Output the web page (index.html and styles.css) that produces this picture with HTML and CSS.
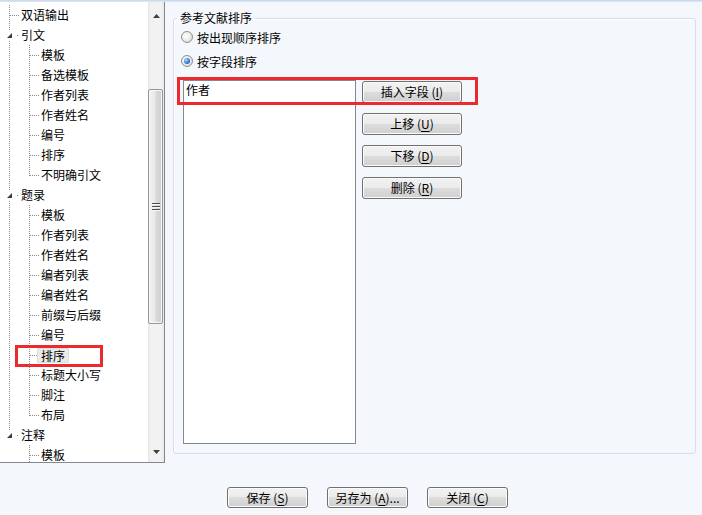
FILE: index.html
```html
<!DOCTYPE html>
<html lang="zh-CN">
<head>
<meta charset="utf-8">
<title>参考文献排序</title>
<link rel="stylesheet" href="styles.css">
</head>
<body>
<div class="topline"></div>
<div class="main">
  <div class="tree">
    <ul class="tree-list">
      <li class="row"><span class="c t"></span><span class="lbl">双语输出</span></li>
      <li class="row"><span class="c x"><svg width="9" height="9" viewBox="0 0 9 9"><rect width="9" height="9" fill="#fff"/><polygon points="7,2 7,7 2,7" fill="#3c3c3c"/></svg></span><span class="lbl">引文</span></li>
      <li class="row"><span class="c v"></span><span class="c t"></span><span class="lbl">模板</span></li>
      <li class="row"><span class="c v"></span><span class="c t"></span><span class="lbl">备选模板</span></li>
      <li class="row"><span class="c v"></span><span class="c t"></span><span class="lbl">作者列表</span></li>
      <li class="row"><span class="c v"></span><span class="c t"></span><span class="lbl">作者姓名</span></li>
      <li class="row"><span class="c v"></span><span class="c t"></span><span class="lbl">编号</span></li>
      <li class="row"><span class="c v"></span><span class="c t"></span><span class="lbl">排序</span></li>
      <li class="row"><span class="c v"></span><span class="c l"></span><span class="lbl">不明确引文</span></li>
      <li class="row"><span class="c x"><svg width="9" height="9" viewBox="0 0 9 9"><rect width="9" height="9" fill="#fff"/><polygon points="7,2 7,7 2,7" fill="#3c3c3c"/></svg></span><span class="lbl">题录</span></li>
      <li class="row"><span class="c v"></span><span class="c t"></span><span class="lbl">模板</span></li>
      <li class="row"><span class="c v"></span><span class="c t"></span><span class="lbl">作者列表</span></li>
      <li class="row"><span class="c v"></span><span class="c t"></span><span class="lbl">作者姓名</span></li>
      <li class="row"><span class="c v"></span><span class="c t"></span><span class="lbl">编者列表</span></li>
      <li class="row"><span class="c v"></span><span class="c t"></span><span class="lbl">编者姓名</span></li>
      <li class="row"><span class="c v"></span><span class="c t"></span><span class="lbl">前缀与后缀</span></li>
      <li class="row"><span class="c v"></span><span class="c t"></span><span class="lbl">编号</span></li>
      <li class="row marked"><span class="c v"></span><span class="c t"></span><span class="lbl sel">排序</span><span class="mark mark-tree"></span></li>
      <li class="row"><span class="c v"></span><span class="c t"></span><span class="lbl">标题大小写</span></li>
      <li class="row"><span class="c v"></span><span class="c t"></span><span class="lbl">脚注</span></li>
      <li class="row"><span class="c v"></span><span class="c l"></span><span class="lbl">布局</span></li>
      <li class="row"><span class="c xl"><svg width="9" height="9" viewBox="0 0 9 9"><rect width="9" height="9" fill="#fff"/><polygon points="7,2 7,7 2,7" fill="#3c3c3c"/></svg></span><span class="lbl">注释</span></li>
      <li class="row"><span class="c"></span><span class="c t"></span><span class="lbl">模板</span></li>
    </ul>
    <div class="scrollbar">
      <div class="sb-btn sb-up"><svg width="7" height="4" viewBox="0 0 7 4"><polygon points="0,4 7,4 3.5,0" fill="#404040"/></svg></div>
      <div class="sb-track">
        <div class="sb-thumb"><span class="grip"></span></div>
      </div>
      <div class="sb-btn sb-down"><svg width="7" height="4" viewBox="0 0 7 4"><polygon points="0,0 7,0 3.5,4" fill="#404040"/></svg></div>
    </div>
  </div>
  <div class="content">
    <fieldset class="group">
      <legend>参考文献排序</legend>
      <label class="radio"><span class="rb"></span>按出现顺序排序</label>
      <label class="radio on"><span class="rb"></span>按字段排序</label>
      <div class="fields">
        <div class="listbox"><div class="item">作者</div></div>
        <div class="btns">
          <button class="btn">插入字段 (<u>I</u>)</button>
          <button class="btn">上移 (<u>U</u>)</button>
          <button class="btn">下移 (<u>D</u>)</button>
          <button class="btn">删除 (<u>R</u>)</button>
        </div>
        <span class="mark mark-fields"></span>
      </div>
    </fieldset>
  </div>
</div>
<div class="footer">
  <button class="btn fbtn">保存 (<u>S</u>)</button>
  <button class="btn fbtn">另存为 (<u>A</u>)...</button>
  <button class="btn fbtn">关闭 (<u>C</u>)</button>
</div>
</body>
</html>
```
FILE: styles.css
```css
* { box-sizing: border-box; }
html, body { margin: 0; padding: 0; }
body {
  width: 702px;
  height: 515px;
  overflow: hidden;
  background: #f4f7fc;
  font-family: "Noto Sans CJK SC", "Noto Sans", sans-serif;
  font-size: 12px;
  color: #000;
}
.topline {
  height: 2px;
  background: linear-gradient(#c3d5ea, #e2ebf6);
}
.main {
  display: flex;
  height: 461px;
}
.tree {
  width: 165px;
  height: 461px;
  flex: none;
  display: flex;
  background: #fff;
  border-right: 1px solid #828790;
  border-bottom: 1px solid #828790;
}
.tree-list {
  list-style: none;
  margin: 0;
  padding: 3px 0 0 0;
  width: 148px;
  flex: none;
  overflow: hidden;
}
.row {
  display: flex;
  align-items: center;
  height: 20px;
  position: relative;
  white-space: nowrap;
}
.c {
  width: 20px;
  height: 20px;
  flex: none;
  background-repeat: no-repeat;
}
.c.v {
  background-image: repeating-linear-gradient(to bottom, #8a8a8a 0 1px, transparent 1px 2px);
  background-size: 1px 20px;
  background-position: 9px 0;
}
.c.t {
  background-image:
    repeating-linear-gradient(to bottom, #8a8a8a 0 1px, transparent 1px 2px),
    repeating-linear-gradient(to right, #8a8a8a 0 1px, transparent 1px 2px);
  background-size: 1px 20px, 9px 1px;
  background-position: 9px 0, 10px 10px;
}
.c.l {
  background-image:
    repeating-linear-gradient(to bottom, #8a8a8a 0 1px, transparent 1px 2px),
    repeating-linear-gradient(to right, #8a8a8a 0 1px, transparent 1px 2px);
  background-size: 1px 11px, 9px 1px;
  background-position: 9px 0, 10px 10px;
}
.c.x, .c.xl {
  display: flex;
  align-items: flex-start;
  background-image:
    repeating-linear-gradient(to bottom, #8a8a8a 0 1px, transparent 1px 2px),
    linear-gradient(#8a8a8a, #8a8a8a);
  background-size: 1px 20px, 1px 1px;
  background-position: 9px 0, 17px 10px;
}
.c.xl {
  background-size: 1px 7px, 1px 1px;
}
.c svg {
  display: block;
  margin: 6px 0 0 5px;
}
.lbl {
  margin-left: 1px;
  line-height: 20px;
}
.lbl.sel {
  margin-left: -3px;
  padding: 0 3px;
  line-height: 13px;
  background: #eaeaea;
  border: 1px solid #dcdcdc;
  border-radius: 1px;
}
.mark {
  position: absolute;
  border: 3px solid #ec2a2e;
  pointer-events: none;
}
.mark-tree {
  left: 15px;
  top: 0;
  width: 88px;
  height: 22px;
}

/* scrollbar */
.scrollbar {
  width: 16px;
  flex: none;
  display: flex;
  flex-direction: column;
  background: linear-gradient(to right, #e4e4e4, #f2f2f2 15%, #f2f2f2 85%, #e8e8e8);
}
.sb-btn {
  flex: none;
  display: flex;
  justify-content: center;
  align-items: center;
}
.sb-up { height: 24px; padding-top: 3px; }
.sb-down { height: 20px; padding-bottom: 1px; }
.sb-track {
  flex: 1;
  padding-top: 63px;
}
.sb-thumb {
  width: 15px;
  height: 235px;
  border: 1px solid #979797;
  border-radius: 2px;
  background: linear-gradient(to right, #f3f3f3, #e9e9e9 45%, #d9d9d9 55%, #cfcfcf);
  box-shadow: inset 0 0 0 1px #f7f7f7;
  display: flex;
  justify-content: center;
  align-items: center;
}
.grip {
  width: 8px;
  height: 8px;
  background: repeating-linear-gradient(to bottom, #4c4c4c 0 1px, #f4f4f4 1px 2px, transparent 2px 3px);
}

/* right content */
.content {
  padding: 8px 0 0 8px;
}
.group {
  width: 523px;
  margin: 0;
  padding: 1px 0 9px 7px;
  border: 1px solid #d5dfe5;
  border-radius: 3px;
  box-shadow: inset 1px 1px 0 #fff;
}
.group legend {
  padding: 0 3px;
  margin-left: -4px;
  line-height: 16px;
  font-size: 12px;
}
.radio {
  display: flex;
  align-items: center;
  height: 20px;
  gap: 4px;
}
.radio + .radio { margin-top: 4px; }
.rb {
  width: 12px;
  height: 12px;
  flex: none;
  border-radius: 50%;
  border: 1px solid #8f8f8f;
  background: radial-gradient(circle at 40% 40%, #ffffff 0%, #e9e9e9 55%, #cfcfcf 100%);
  display: flex;
  justify-content: center;
  align-items: center;
}
.radio.on .rb::after {
  content: "";
  width: 6px;
  height: 6px;
  border-radius: 50%;
  background: radial-gradient(circle at 35% 35%, #b8e0ff 0%, #3b8ee0 45%, #0c4e9a 100%);
}
.fields {
  position: relative;
  display: flex;
  align-items: flex-start;
  margin: 9px 0 0 2px;
}
.listbox {
  width: 173px;
  height: 364px;
  flex: none;
  background: #fff;
  border: 1px solid #828790;
}
.item {
  padding-left: 2px;
  line-height: 18px;
}
.btns {
  display: flex;
  flex-direction: column;
  gap: 10px;
  margin: 1px 0 0 6px;
}
.btn {
  width: 100px;
  height: 22px;
  padding: 0;
  border: 1px solid #707070;
  border-radius: 3px;
  background: linear-gradient(#f2f2f2 0%, #ebebeb 50%, #dddddd 50%, #cfcfcf 100%);
  box-shadow: inset 0 0 0 1px #fbfbfb;
  font-family: "Noto Sans CJK SC", "Noto Sans", sans-serif;
  font-size: 12px;
  line-height: 18px;
  color: #000;
  text-align: center;
}
.btn u { text-underline-offset: 2px; }
.mark-fields {
  left: -6px;
  top: -3px;
  width: 301px;
  height: 28px;
}

/* footer */
.footer {
  display: flex;
  gap: 19px;
  padding: 24px 0 0 227px;
}
.fbtn {
  width: 81px;
  height: 21px;
}
```
